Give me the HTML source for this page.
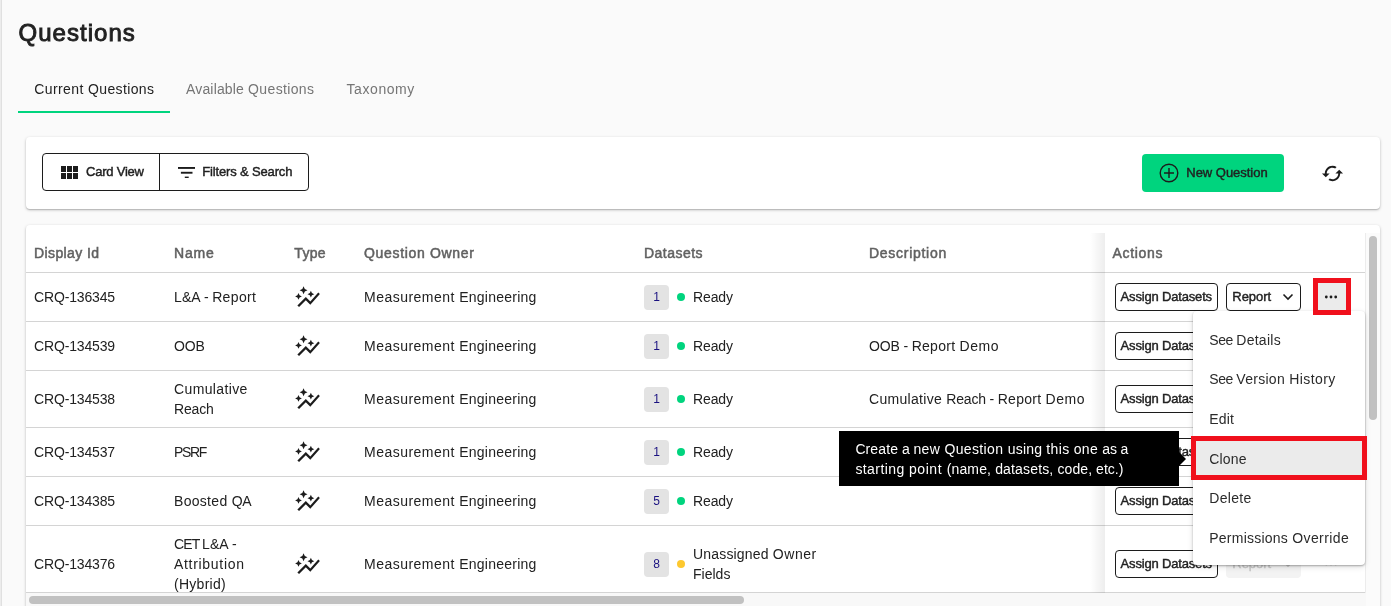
<!DOCTYPE html>
<html lang="en">
<head>
<meta charset="utf-8">
<title>Questions</title>
<style>
*{box-sizing:border-box;margin:0;padding:0}
html,body{width:1391px;height:606px;overflow:hidden}
body{background:#fafafa;font-family:"Liberation Sans",sans-serif;color:#212121;position:relative;font-size:14px}
.abs{position:absolute}
.edge1{left:0;top:0;width:1px;height:606px;background:#ececec}
.edge2{left:1px;top:0;width:1px;height:606px;background:#e0e0e0}
h1{position:absolute;font-size:24px;line-height:30px;font-weight:700;color:#212121;white-space:nowrap}
.tab{position:absolute;font-size:14px;line-height:20px;white-space:nowrap;color:#757575}
.tab.on{color:#212121}
.tabline{left:18px;top:111px;width:152px;height:2px;background:#00d47e}
.card{position:absolute;background:#fff;border-radius:4px;box-shadow:0 1px 3px rgba(0,0,0,.25),0 1px 1px rgba(0,0,0,.12)}
.toolbar{left:26px;top:137px;width:1354px;height:72px}
.btngrp{position:absolute;left:42px;top:153px;width:267px;height:38px;border:1px solid #1c1c1c;border-radius:4px;background:#fff}
.btngrp .div{position:absolute;left:116px;top:0;width:1px;height:36px;background:#1c1c1c}
.btxt{position:absolute;font-size:13px;font-weight:400;-webkit-text-stroke:0.42px #212121;line-height:16px;white-space:nowrap;color:#212121}
.newq{position:absolute;left:1142px;top:154px;width:142px;height:38px;border-radius:4px;background:#00d47e}
.tablecard{left:26px;top:225px;width:1354px;height:400px}
.th{position:absolute;font-size:14px;font-weight:400;-webkit-text-stroke:0.5px #616161;line-height:20px;color:#616161;white-space:nowrap}
.hl{position:absolute;left:26px;width:1339px;height:1px;background:#d4d4d4}
.td{position:absolute;font-size:14px;line-height:20px;color:#212121;white-space:nowrap}
.badge{position:absolute;left:644px;width:25px;height:25px;border-radius:4px;background:#e3e3e3;color:#1a1180;font-size:12px;line-height:25px;text-align:center}
.dot{position:absolute;left:677px;width:8px;height:8px;border-radius:50%;background:#00d47e}
.dot.y{background:#fdc82f}
.ticon{position:absolute;left:294.300px;width:27px;height:27px}
.actions{position:absolute;left:1105px;top:233px;width:261px;height:360px;background:#fff}
.ashadow{position:absolute;left:1090px;top:233px;width:15px;height:360px;background:linear-gradient(to right,rgba(0,0,0,0),rgba(0,0,0,.072))}
.obtn{position:absolute;height:28px;border:1px solid #1c1c1c;border-radius:4px;background:#fff}
.otxt{position:absolute;font-size:13px;font-weight:400;-webkit-text-stroke:0.42px #212121;line-height:16px;white-space:nowrap;color:#212121}
.menu{position:absolute;left:1193px;top:311px;width:172px;height:254px;background:#fff;border-radius:4px;box-shadow:0 1px 2px rgba(0,0,0,.3),0 2px 6px rgba(0,0,0,.12)}
.mi{position:absolute;font-size:14px;line-height:20px;color:#2b2b2b;white-space:nowrap}
.tip{position:absolute;left:839px;top:431px;width:340px;height:55px;background:#000}
.tiptxt{position:absolute;color:#fff;font-size:14px;line-height:20px;white-space:nowrap}
.tiparrow{position:absolute;left:1179px;top:452px;width:0;height:0;border-top:7px solid transparent;border-bottom:7px solid transparent;border-left:7px solid #000}
</style>
</head>
<body>
<div id="root" style="position:absolute;left:0;top:0;width:1391px;height:606px;will-change:transform">
<div class="abs edge1"></div><div class="abs edge2"></div>
<h1 style="left:18.500px;top:18px;font-weight:400;-webkit-text-stroke:0.9px #212121;letter-spacing:1.038px">Questions</h1>
<div class="tab on" style="left:34.2px;top:79px"><span style="letter-spacing:0.414px">Current </span><span style="letter-spacing:0.356px">Questions</span></div>
<div class="tab" style="left:186px;top:79px"><span style="letter-spacing:0.165px">Available </span><span style="letter-spacing:0.356px">Questions</span></div>
<div class="tab" style="left:346.5px;top:79px;letter-spacing:0.580px">Taxonomy</div>
<div class="abs tabline"></div>
<div class="card toolbar"></div>
<div class="btngrp"><div class="div"></div></div>
<svg class="abs" style="left:61px;top:166px" width="17" height="13" viewBox="0 0 17 13"><g fill="#1c1c1c"><rect x="0" y="0" width="5" height="6"/><rect x="6" y="0" width="5" height="6"/><rect x="12" y="0" width="5" height="6"/><rect x="0" y="7" width="5" height="6"/><rect x="6" y="7" width="5" height="6"/><rect x="12" y="7" width="5" height="6"/></g></svg>
<div class="btxt" style="left:86px;top:164px;letter-spacing:-0.215px">Card View</div>
<svg class="abs" style="left:177.700px;top:166.800px" width="17.400" height="11.600" viewBox="0 0 17.400 11.600"><g fill="#1c1c1c"><rect x="0" y="0" width="17.400" height="1.900"/><rect x="2.900" y="4.800" width="11.600" height="1.900"/><rect x="6.800" y="9.600" width="3.900" height="1.900"/></g></svg>
<div class="btxt" style="left:202.2px;top:164px;letter-spacing:-0.148px">Filters &amp; Search</div>
<div class="newq"></div>
<svg class="abs" style="left:1159.400px;top:163.200px" width="20" height="20" viewBox="0 0 20 20"><circle cx="10" cy="10" r="8.800" fill="none" stroke="#1c1c1c" stroke-width="1.400"/><path d="M10 5v10M5 10h10" stroke="#1c1c1c" stroke-width="1.400" fill="none"/></svg>
<div class="btxt" style="left:1186.3px;top:165px;letter-spacing:-0.029px">New Question</div>
<svg class="abs" style="left:1321px;top:161.700px" width="23" height="23" viewBox="0 0 24 24"><path fill="#1c1c1c" d="M19 8l-4 4h3c0 3.310-2.690 6-6 6-1.010 0-1.970-.250-2.800-.700l-1.460 1.460C8.970 19.540 10.430 20 12 20c4.420 0 8-3.580 8-8h3l-4-4zM6 12c0-3.310 2.690-6 6-6 1.010 0 1.970.250 2.800.700l1.460-1.460C15.030 4.460 13.570 4 12 4c-4.420 0-8 3.580-8 8H1l4 4 4-4H6z"/></svg>
<div class="card tablecard"></div>
<div class="th" style="left:34px;top:243px;letter-spacing:0.393px">Display Id</div>
<div class="th" style="left:174px;top:243px;letter-spacing:0.814px">Name</div>
<div class="th" style="left:294.3px;top:243px;letter-spacing:0.312px">Type</div>
<div class="th" style="left:364px;top:243px;letter-spacing:0.674px">Question Owner</div>
<div class="th" style="left:644px;top:243px;letter-spacing:0.469px">Datasets</div>
<div class="th" style="left:869px;top:243px;letter-spacing:0.716px">Description</div>
<div class="hl" style="top:272px"></div>
<div class="hl" style="top:321px"></div>
<div class="hl" style="top:370px"></div>
<div class="hl" style="top:427px"></div>
<div class="hl" style="top:476px"></div>
<div class="hl" style="top:525px"></div>
<div class="hl" style="top:592px"></div>
<div class="td" style="left:34px;top:287px;letter-spacing:-0.157px">CRQ-136345</div>
<div class="td" style="left:174px;top:287px"><span style="letter-spacing:0.101px">L&amp;A </span><span style="letter-spacing:-0.205px">- </span><span style="letter-spacing:0.363px">Report</span></div>
<div class="td" style="left:364px;top:287px"><span style="letter-spacing:0.474px">Measurement </span><span style="letter-spacing:0.244px">Engineering</span></div>
<div class="badge" style="top:285px">1</div><div class="dot" style="top:293px"></div>
<div class="td" style="left:693px;top:287px;letter-spacing:-0.122px">Ready</div>
<div class="td" style="left:34px;top:336px;letter-spacing:-0.157px">CRQ-134539</div>
<div class="td" style="left:174px;top:336px;letter-spacing:-0.080px">OOB</div>
<div class="td" style="left:364px;top:336px"><span style="letter-spacing:0.474px">Measurement </span><span style="letter-spacing:0.244px">Engineering</span></div>
<div class="badge" style="top:334px">1</div><div class="dot" style="top:342px"></div>
<div class="td" style="left:693px;top:336px;letter-spacing:-0.122px">Ready</div>
<div class="td" style="left:869px;top:336px"><span style="letter-spacing:-0.123px">OOB </span><span style="letter-spacing:-0.205px">- </span><span style="letter-spacing:0.275px">Report </span><span style="letter-spacing:0.549px">Demo</span></div>
<div class="td" style="left:34px;top:389px;letter-spacing:-0.157px">CRQ-134538</div>
<div class="td" style="left:174px;top:379px;letter-spacing:0.365px">Cumulative</div>
<div class="td" style="left:174px;top:399px;letter-spacing:-0.183px">Reach</div>
<div class="td" style="left:364px;top:389px"><span style="letter-spacing:0.474px">Measurement </span><span style="letter-spacing:0.244px">Engineering</span></div>
<div class="badge" style="top:387px">1</div><div class="dot" style="top:395px"></div>
<div class="td" style="left:693px;top:389px;letter-spacing:-0.122px">Ready</div>
<div class="td" style="left:869px;top:389px"><span style="letter-spacing:0.309px">Cumulative </span><span style="letter-spacing:-0.195px">Reach </span><span style="letter-spacing:-0.205px">- </span><span style="letter-spacing:0.275px">Report </span><span style="letter-spacing:0.549px">Demo</span></div>
<div class="td" style="left:34px;top:442px;letter-spacing:-0.157px">CRQ-134537</div>
<div class="td" style="left:174px;top:442px;letter-spacing:-1.337px">PSRF</div>
<div class="td" style="left:364px;top:442px"><span style="letter-spacing:0.474px">Measurement </span><span style="letter-spacing:0.244px">Engineering</span></div>
<div class="badge" style="top:440px">1</div><div class="dot" style="top:448px"></div>
<div class="td" style="left:693px;top:442px;letter-spacing:-0.122px">Ready</div>
<div class="td" style="left:34px;top:491px;letter-spacing:-0.157px">CRQ-134385</div>
<div class="td" style="left:174px;top:491px"><span style="letter-spacing:0.302px">Boosted </span><span style="letter-spacing:-0.232px">QA</span></div>
<div class="td" style="left:364px;top:491px"><span style="letter-spacing:0.474px">Measurement </span><span style="letter-spacing:0.244px">Engineering</span></div>
<div class="badge" style="top:489px">5</div><div class="dot" style="top:497px"></div>
<div class="td" style="left:693px;top:491px;letter-spacing:-0.122px">Ready</div>
<div class="td" style="left:34px;top:554px;letter-spacing:-0.157px">CRQ-134376</div>
<div class="td" style="left:174px;top:534px"><span style="letter-spacing:-0.909px">CET </span><span style="letter-spacing:0.101px">L&amp;A </span><span style="letter-spacing:-0.157px">-</span></div>
<div class="td" style="left:174px;top:554px;letter-spacing:0.697px">Attribution</div>
<div class="td" style="left:174px;top:574px;letter-spacing:0.279px">(Hybrid)</div>
<div class="td" style="left:364px;top:554px"><span style="letter-spacing:0.474px">Measurement </span><span style="letter-spacing:0.244px">Engineering</span></div>
<div class="badge" style="top:552px">8</div><div class="dot y" style="top:560px"></div>
<div class="td" style="left:693px;top:544px"><span style="letter-spacing:0.180px">Unassigned </span><span style="letter-spacing:0.544px">Owner</span></div>
<div class="td" style="left:693px;top:564px;letter-spacing:0.012px">Fields</div>
<svg class="ticon" style="top:284.3px" viewBox="0 0 24 24"><path fill="#1c1c1c" d="M14.060 9.940 12 9l2.060-.940L15 6l.940 2.060L18 9l-2.060.940L15 12l-.940-2.060zM4 14l.940-2.060L7 11l-2.060-.940L4 8l-.940 2.060L1 11l2.060.940L4 14zm4.500-5 1.090-2.410L12 5.500 9.590 4.410 8.500 2 7.410 4.410 5 5.500l2.410 1.090L8.500 9zm-4 11.500 6-6.010 4 4L23 8.930l-1.410-1.410-7.090 7.970-4-4L3 19l1.500 1.500z"/></svg>
<svg class="ticon" style="top:333.3px" viewBox="0 0 24 24"><path fill="#1c1c1c" d="M14.060 9.940 12 9l2.060-.940L15 6l.940 2.060L18 9l-2.060.940L15 12l-.940-2.060zM4 14l.940-2.060L7 11l-2.060-.940L4 8l-.940 2.060L1 11l2.060.940L4 14zm4.500-5 1.090-2.410L12 5.500 9.590 4.410 8.500 2 7.410 4.410 5 5.500l2.410 1.090L8.500 9zm-4 11.500 6-6.010 4 4L23 8.930l-1.410-1.410-7.090 7.970-4-4L3 19l1.500 1.500z"/></svg>
<svg class="ticon" style="top:386.3px" viewBox="0 0 24 24"><path fill="#1c1c1c" d="M14.060 9.940 12 9l2.060-.940L15 6l.940 2.060L18 9l-2.060.940L15 12l-.940-2.060zM4 14l.940-2.060L7 11l-2.060-.940L4 8l-.940 2.060L1 11l2.060.940L4 14zm4.500-5 1.090-2.410L12 5.500 9.590 4.410 8.500 2 7.410 4.410 5 5.500l2.410 1.090L8.500 9zm-4 11.500 6-6.010 4 4L23 8.930l-1.410-1.410-7.090 7.970-4-4L3 19l1.500 1.500z"/></svg>
<svg class="ticon" style="top:439.3px" viewBox="0 0 24 24"><path fill="#1c1c1c" d="M14.060 9.940 12 9l2.060-.940L15 6l.940 2.060L18 9l-2.060.940L15 12l-.940-2.060zM4 14l.940-2.060L7 11l-2.060-.940L4 8l-.940 2.060L1 11l2.060.940L4 14zm4.500-5 1.090-2.410L12 5.500 9.590 4.410 8.500 2 7.410 4.410 5 5.500l2.410 1.090L8.500 9zm-4 11.500 6-6.010 4 4L23 8.930l-1.410-1.410-7.090 7.970-4-4L3 19l1.500 1.500z"/></svg>
<svg class="ticon" style="top:488.3px" viewBox="0 0 24 24"><path fill="#1c1c1c" d="M14.060 9.940 12 9l2.060-.940L15 6l.940 2.060L18 9l-2.060.940L15 12l-.940-2.060zM4 14l.940-2.060L7 11l-2.060-.940L4 8l-.940 2.060L1 11l2.060.940L4 14zm4.500-5 1.090-2.410L12 5.500 9.590 4.410 8.500 2 7.410 4.410 5 5.500l2.410 1.090L8.500 9zm-4 11.500 6-6.010 4 4L23 8.930l-1.410-1.410-7.090 7.970-4-4L3 19l1.500 1.500z"/></svg>
<svg class="ticon" style="top:551.3px" viewBox="0 0 24 24"><path fill="#1c1c1c" d="M14.060 9.940 12 9l2.060-.940L15 6l.940 2.060L18 9l-2.060.940L15 12l-.940-2.060zM4 14l.940-2.060L7 11l-2.060-.940L4 8l-.940 2.060L1 11l2.060.940L4 14zm4.500-5 1.090-2.410L12 5.500 9.590 4.410 8.500 2 7.410 4.410 5 5.500l2.410 1.090L8.500 9zm-4 11.500 6-6.010 4 4L23 8.930l-1.410-1.410-7.090 7.970-4-4L3 19l1.500 1.500z"/></svg>
<div class="ashadow"></div><div class="actions"></div>
<div class="th" style="left:1112.5px;top:243px;letter-spacing:0.670px">Actions</div>
<div class="hl" style="top:272px;left:1105px;width:261px"></div>
<div class="hl" style="top:321px;left:1105px;width:261px"></div>
<div class="hl" style="top:370px;left:1105px;width:261px"></div>
<div class="hl" style="top:427px;left:1105px;width:261px"></div>
<div class="hl" style="top:476px;left:1105px;width:261px"></div>
<div class="hl" style="top:525px;left:1105px;width:261px"></div>
<div class="hl" style="top:592px;left:1105px;width:261px"></div>
<div class="obtn" style="left:1115px;top:283px;width:103px"></div><div class="otxt" style="left:1120.6px;top:289px;letter-spacing:-0.176px">Assign Datasets</div>
<div class="obtn" style="left:1115px;top:332px;width:103px"></div><div class="otxt" style="left:1120.6px;top:338px;letter-spacing:-0.176px">Assign Datasets</div>
<div class="obtn" style="left:1115px;top:385px;width:103px"></div><div class="otxt" style="left:1120.6px;top:391px;letter-spacing:-0.176px">Assign Datasets</div>
<div class="obtn" style="left:1115px;top:438px;width:103px"></div><div class="otxt" style="left:1120.6px;top:444px;letter-spacing:-0.176px">Assign Datasets</div>
<div class="obtn" style="left:1115px;top:487px;width:103px"></div><div class="otxt" style="left:1120.6px;top:493px;letter-spacing:-0.176px">Assign Datasets</div>
<div class="obtn" style="left:1115px;top:550px;width:103px"></div><div class="otxt" style="left:1120.6px;top:556px;letter-spacing:-0.176px">Assign Datasets</div>
<div class="obtn" style="left:1226px;top:283px;width:75px"></div><div class="otxt" style="left:1232.3px;top:289px;letter-spacing:-0.037px">Report</div>
<svg class="abs" style="left:1282px;top:293px" width="12" height="8" viewBox="0 0 12 8"><path d="M1.500 1.500 6 6l4.500-4.500" fill="none" stroke="#1c1c1c" stroke-width="1.600"/></svg>
<div class="abs" style="left:1226px;top:550px;width:75px;height:28px;border-radius:4px;background:#f3f3f3"></div><div class="otxt" style="left:1232.3px;top:556px;letter-spacing:-0.037px;color:#c8c8c8;-webkit-text-stroke:0.4px #c8c8c8">Report</div>
<svg class="abs" style="left:1282px;top:560px" width="12" height="8" viewBox="0 0 12 8"><path d="M1.500 1.500 6 6l4.500-4.500" fill="none" stroke="#c8c8c8" stroke-width="1.600"/></svg>
<svg class="abs" style="left:1324px;top:561.900px" width="14" height="4" viewBox="0 0 14 4"><circle cx="2.300" cy="2" r="1.400" fill="#c8c8c8"/><circle cx="7" cy="2" r="1.400" fill="#c8c8c8"/><circle cx="11.700" cy="2" r="1.400" fill="#c8c8c8"/></svg>
<div class="abs" style="left:1366px;top:233px;width:14px;height:373px;background:#fbfbfb"></div>
<div class="abs" style="left:1365px;top:233px;width:1px;height:360px;background:#ececec"></div>
<div class="abs" style="left:1369px;top:236px;width:8px;height:184px;border-radius:4px;background:#c1c1c1"></div>
<div class="abs" style="left:26px;top:593px;width:1340px;height:13px;background:#f8f8f8"></div>
<div class="abs" style="left:29px;top:596px;width:715px;height:8px;border-radius:4px;background:#c1c1c1"></div>
<div class="menu"></div>
<div class="mi" style="left:1209.3px;top:330px"><span style="letter-spacing:-0.443px">See </span><span style="letter-spacing:0.251px">Details</span></div>
<div class="mi" style="left:1209.3px;top:369px"><span style="letter-spacing:-0.443px">See </span><span style="letter-spacing:0.278px">Version </span><span style="letter-spacing:0.441px">History</span></div>
<div class="mi" style="left:1209.3px;top:409px;letter-spacing:0.181px">Edit</div>
<div class="abs" style="left:1191px;top:436px;width:176px;height:44px;background:#ebebeb;border:5px solid #f0101c"></div>
<div class="mi" style="left:1209.3px;top:449px;letter-spacing:0.139px">Clone</div>
<div class="mi" style="left:1209.3px;top:488px;letter-spacing:0.297px">Delete</div>
<div class="mi" style="left:1209.3px;top:528px"><span style="letter-spacing:0.224px">Permissions </span><span style="letter-spacing:0.431px">Override</span></div>
<div class="abs" style="left:1313px;top:278px;width:38px;height:37px;background:#ebebeb;border:5px solid #f0101c"></div>
<svg class="abs" style="left:1324px;top:294.900px" width="14" height="4" viewBox="0 0 14 4"><circle cx="2.300" cy="2" r="1.400" fill="#1c1c1c"/><circle cx="7" cy="2" r="1.400" fill="#1c1c1c"/><circle cx="11.700" cy="2" r="1.400" fill="#1c1c1c"/></svg>
<div class="tip"></div><div class="tiparrow"></div>
<div class="tiptxt" style="left:855.4px;top:439.3px"><span style="letter-spacing:0.102px">Create </span><span style="letter-spacing:-0.126px">a </span><span style="letter-spacing:0.350px">new </span><span style="letter-spacing:0.364px">Question </span><span style="letter-spacing:0.226px">using </span><span style="letter-spacing:0.343px">this </span><span style="letter-spacing:0.323px">one </span><span style="letter-spacing:-0.191px">as </span><span style="letter-spacing:-0.000px">a</span></div>
<div class="tiptxt" style="left:855.4px;top:459.3px"><span style="letter-spacing:0.412px">starting </span><span style="letter-spacing:0.583px">point </span><span style="letter-spacing:0.144px">(name, </span><span style="letter-spacing:0.161px">datasets, </span><span style="letter-spacing:0.081px">code, </span><span style="letter-spacing:0.020px">etc.)</span></div>
</div>
</body>
</html>
